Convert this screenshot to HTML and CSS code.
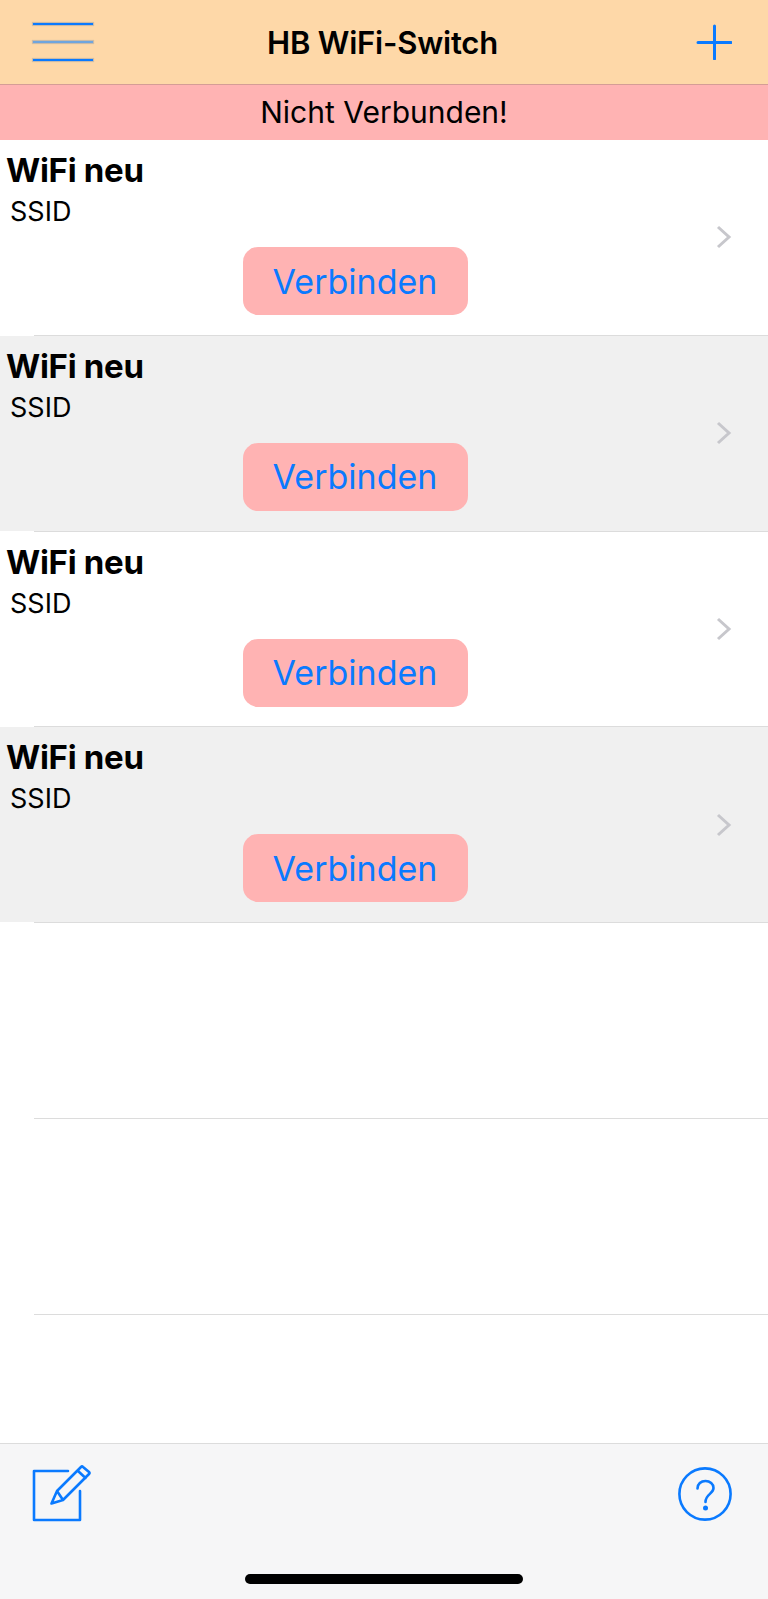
FILE: index.html
```html
<!DOCTYPE html>
<html lang="de">
<head>
  <meta charset="UTF-8" />
  <meta name="viewport" content="width=device-width, initial-scale=1.0"/>
  <title>HB WiFi-Switch</title>
  <link rel="stylesheet" href="styles.css">
</head>
<body>
  <div class="app">
    <header class="topbar">
      <button class="icon-btn menu-btn" type="button" aria-label="Menu">
        <span class="menu-line"></span>
        <span class="menu-line menu-line-mid"></span>
        <span class="menu-line"></span>
      </button>
      <h1>HB WiFi-Switch</h1>
      <button class="icon-btn add-btn" type="button" aria-label="Add">
        <svg width="36" height="36" viewBox="0 0 36 36"><path d="M18.500 2v33M2 18.500h33" fill="none" stroke="#0a7aff" stroke-width="3" stroke-linecap="round"/></svg>
      </button>
    </header>

    <div class="status">Nicht Verbunden!</div>

    <main class="list">
      <div class="row">
        <div class="row-body">
          <div class="row-content">
            <div class="row-title">WiFi neu</div>
            <div class="row-ssid">SSID</div>
            <button class="connect" type="button">Verbinden</button>
          </div>
          <svg class="chevron" width="16" height="24" viewBox="0 0 16 24"><path d="M2 2l11 10L2 22" fill="none" stroke="#c7c7cc" stroke-width="3"/></svg>
        </div>
        <div class="sep"></div>
      </div>
      <div class="row alt">
        <div class="row-body">
          <div class="row-content">
            <div class="row-title">WiFi neu</div>
            <div class="row-ssid">SSID</div>
            <button class="connect" type="button">Verbinden</button>
          </div>
          <svg class="chevron" width="16" height="24" viewBox="0 0 16 24"><path d="M2 2l11 10L2 22" fill="none" stroke="#c7c7cc" stroke-width="3"/></svg>
        </div>
        <div class="sep"></div>
      </div>
      <div class="row">
        <div class="row-body">
          <div class="row-content">
            <div class="row-title">WiFi neu</div>
            <div class="row-ssid">SSID</div>
            <button class="connect" type="button">Verbinden</button>
          </div>
          <svg class="chevron" width="16" height="24" viewBox="0 0 16 24"><path d="M2 2l11 10L2 22" fill="none" stroke="#c7c7cc" stroke-width="3"/></svg>
        </div>
        <div class="sep"></div>
      </div>
      <div class="row alt">
        <div class="row-body">
          <div class="row-content">
            <div class="row-title">WiFi neu</div>
            <div class="row-ssid">SSID</div>
            <button class="connect" type="button">Verbinden</button>
          </div>
          <svg class="chevron" width="16" height="24" viewBox="0 0 16 24"><path d="M2 2l11 10L2 22" fill="none" stroke="#c7c7cc" stroke-width="3"/></svg>
        </div>
        <div class="sep"></div>
      </div>
      <!-- empty table cells -->
      <div class="row"><div class="row-body"></div><div class="sep"></div></div>
      <div class="row"><div class="row-body"></div><div class="sep"></div></div>
    </main>

    <footer class="toolbar">
      <div class="toolbar-icons">
        <button class="icon-btn" type="button" aria-label="Edit">
          <svg width="60" height="60" viewBox="0 0 60 60" fill="none" stroke="#0a7aff" stroke-width="2.600" stroke-linecap="round" stroke-linejoin="round">
            <path d="M36 7H2v49h46V27"/>
            <path d="M19.500 39.500L25 27 49 3q1-1 2 0l6 5q1 1 0 2L31 36zM25 27l6 9M45.500 6.500l8 7.500"/>
          </svg>
        </button>
        <button class="icon-btn" type="button" aria-label="Help">
          <svg width="56" height="56" viewBox="0 0 56 56" fill="none" stroke="#0a7aff" stroke-width="2.600">
            <circle cx="28" cy="28" r="25.600"/>
            <path d="M20.500 22.500c0-4.500 3.500-7.500 8-7.500s8 3 8 7c0 6-8 6-8 14" stroke-linecap="round"/>
            <circle cx="28.500" cy="42" r="2.500" fill="#0a7aff" stroke="none"/>
          </svg>
        </button>
      </div>
      <div class="home-bar"></div>
    </footer>
  </div>
</body>
</html>
```

FILE: styles.css
```css
:root {
  --blue: #0a7aff;
  --pink: #ffb3b3;
  --line: #dcdcdc;
}

* {
  box-sizing: border-box;
}

body {
  margin: 0;
  font-family: Inter, 'Liberation Sans', sans-serif;
  color: #000;
  background: #fff;
}

button {
  font-family: inherit;
  border: none;
  padding: 0;
  background: none;
  cursor: pointer;
}

.app {
  display: flex;
  flex-direction: column;
  height: 1599px;
  overflow: hidden;
}

.icon-btn {
  display: flex;
}

/* top bar */
.topbar {
  display: grid;
  grid-template-columns: 1fr auto 1fr;
  align-items: center;
  height: 85px;
  padding: 0 36px 0 33px;
  background: #fed8a8;
  border-bottom: 1px solid #d59d96;
}

.topbar h1 {
  margin: 0;
  font-size: 31px;
  font-weight: 600;
  letter-spacing: -0.2px;
}

.menu-btn {
  flex-direction: column;
  gap: 16px;
  width: 60px;
}

.add-btn {
  justify-self: end;
}

.menu-line {
  height: 2px;
  background: var(--blue);
  box-shadow: 0 0 1px 1px rgba(60, 110, 170, 0.3);
}

.menu-line-mid {
  background: #6fa5de;
}

.status {
  height: 55px;
  line-height: 55px;
  text-align: center;
  font-size: 30px;
  background: var(--pink);
}

/* list */
.list {
  flex: 1;
  min-height: 0;
}

.row-body {
  display: flex;
  align-items: center;
  height: 194.8px;
}

.alt .row-body {
  background: #f0f0f0;
}

.row-content {
  display: flex;
  flex-direction: column;
  flex: 1;
  height: 100%;
  padding: 12px 0 0 0;
}

.row-title {
  padding-left: 6px;
  font-size: 33px;
  line-height: 36px;
  font-weight: 700;
  letter-spacing: -0.3px;
}

.row-ssid {
  padding-left: 10px;
  margin-top: 9px;
  font-size: 27px;
  line-height: 30px;
}

.connect {
  align-self: center;
  width: 225px;
  height: 68px;
  margin-top: 20px;
  font-size: 34px;
  color: var(--blue);
  background: var(--pink);
  border-radius: 15px;
}

.chevron {
  margin-right: 36px;
  margin-left: 6px;
}

.sep {
  height: 1px;
  margin-left: 34px;
  background: var(--line);
}

/* bottom toolbar */
.toolbar {
  display: flex;
  flex-direction: column;
  height: 156px;
  background: #f6f6f7;
  border-top: 1px solid var(--line);
}

.toolbar-icons {
  display: flex;
  align-items: center;
  justify-content: space-between;
  padding: 20px 35px 0 32px;
}

.home-bar {
  width: 278px;
  height: 10px;
  margin: 50px auto 0;
  background: #000;
  border-radius: 5px;
}
```
